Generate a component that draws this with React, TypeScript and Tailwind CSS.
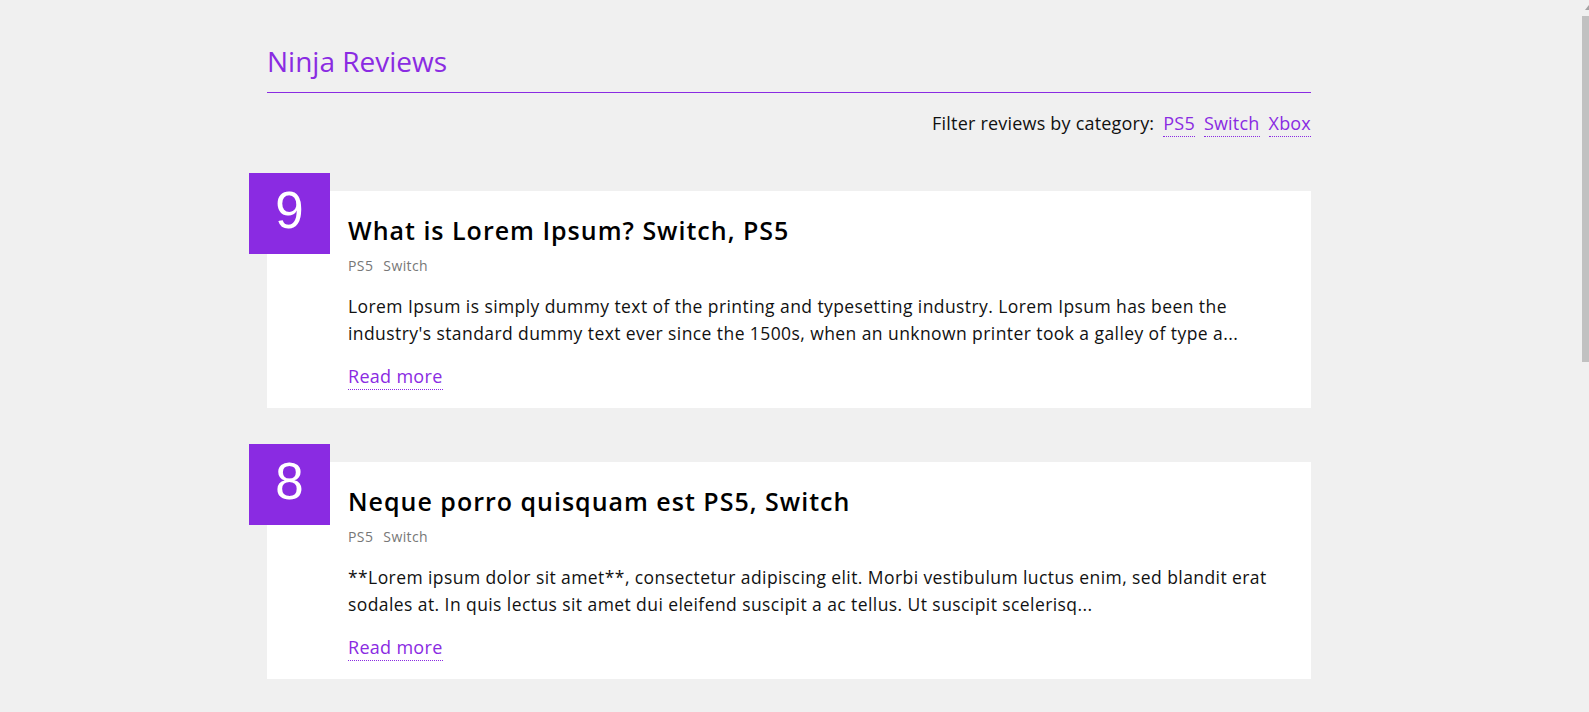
import React from "react";

type Review = {
  id: number;
  rating: number;
  title: string;
  categories: string[];
  body: string;
};

const reviews: Review[] = [
  {
    id: 1,
    rating: 9,
    title: "What is Lorem Ipsum? Switch, PS5",
    categories: ["PS5", "Switch"],
    body: "Lorem Ipsum is simply dummy text of the printing and typesetting industry. Lorem Ipsum has been the industry's standard dummy text ever since the 1500s, when an unknown printer took a galley of type a...",
  },
  {
    id: 2,
    rating: 8,
    title: "Neque porro quisquam est PS5, Switch",
    categories: ["PS5", "Switch"],
    body: "**Lorem ipsum dolor sit amet**, consectetur adipiscing elit. Morbi vestibulum luctus enim, sed blandit erat sodales at. In quis lectus sit amet dui eleifend suscipit a ac tellus. Ut suscipit scelerisq...",
  },
];

const categories = ["PS5", "Switch", "Xbox"];

function ReviewCard({ review }: { review: Review }) {
  return (
    <div className="relative mt-[54px] bg-white pl-[81px] pr-[30px] pt-[21px] pb-[18px]">
      {/* rating badge hangs over the top-left corner */}
      <div className="absolute left-[-18px] top-[-18px] flex h-[81px] w-[81px] items-center justify-center bg-[#8a2be2] pb-[6px] font-['Liberation_Sans',sans-serif] text-[51px] leading-none text-white">
        {review.rating}
      </div>
      <h2 className="text-[25px] leading-[36px] font-semibold tracking-[1px] text-black">
        {review.title}
      </h2>
      <div className="mt-[8px] flex gap-[10px] text-[14px] leading-[20px] tracking-[0.4px] text-[#777]">
        {review.categories.map((c) => (
          <small key={c} className="text-[14px]">{c}</small>
        ))}
      </div>
      <p className="mt-[17px] text-[17.5px] leading-[27px] tracking-[0.42px] text-[#111]">
        {review.body}
      </p>
      <a
        href="#"
        className="mt-[17px] inline-block border-b border-dotted border-[#8a2be2] pb-[1px] text-[18px] leading-[24px] tracking-[0.3px] text-[#8a2be2]"
      >
        Read more
      </a>
    </div>
  );
}

export default function App() {
  return (
    <div className="flex min-h-screen overflow-hidden bg-[#f0f0f0] font-['Open_Sans',sans-serif]">
      <main className="flex-1 pb-[60px]">
        <div className="mx-auto w-[1044px] pt-[44px]">
          <div className="border-b border-[#8a2be2] pb-[14px]">
            <h1 className="text-[28px] leading-[34px] text-[#8a2be2]">Ninja Reviews</h1>
          </div>

          <div className="mt-[18px] flex justify-end text-[18px] leading-[24px] tracking-[0.2px] text-[#111]">
            <span>Filter reviews by category:</span>
            {categories.map((c) => (
              <a
                key={c}
                href="#"
                className="ml-[9px] border-b border-dotted border-[#8a2be2] pb-[1px] text-[#8a2be2]"
              >
                {c}
              </a>
            ))}
          </div>

          {reviews.map((r) => (
            <ReviewCard key={r.id} review={r} />
          ))}
        </div>
      </main>

      {/* window scrollbar */}
      <aside className="w-[11px] shrink-0 overflow-hidden">
        <div className="ml-[7px] mt-[5px] h-0 w-0 border-x-[4px] border-b-[5px] border-x-transparent border-b-[#a3a3a3]" />
        <div className="ml-[4px] mt-[6px] h-[346px] w-[7px] bg-[#c1c1c1]" />
      </aside>
    </div>
  );
}
